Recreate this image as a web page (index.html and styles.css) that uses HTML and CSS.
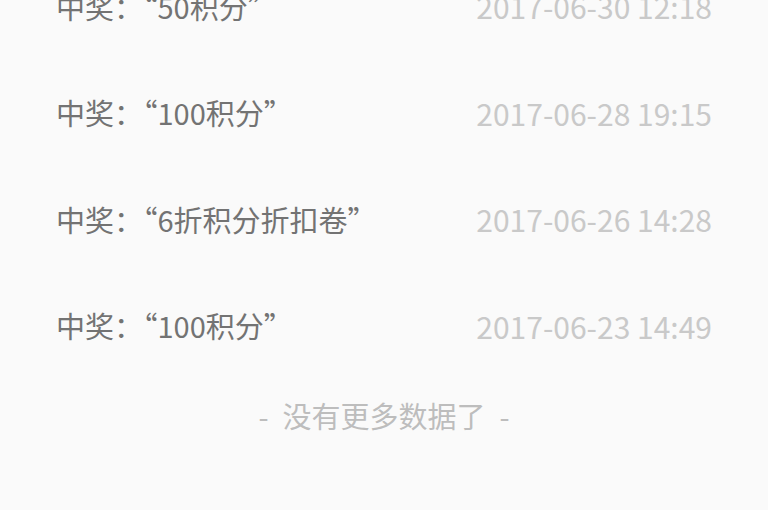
FILE: index.html
```html
<!DOCTYPE html>
<html lang="zh">
<head>
<meta charset="utf-8">
<link rel="stylesheet" href="styles.css">
</head>
<body>
<div class="page">
  <ul class="list">
    <li class="row"><span class="prize">中奖：“50积分”</span><span class="date">2017-06-30 12:18</span></li>
    <li class="row"><span class="prize">中奖：“100积分”</span><span class="date">2017-06-28 19:15</span></li>
    <li class="row"><span class="prize">中奖：“6折积分折扣卷”</span><span class="date">2017-06-26 14:28</span></li>
    <li class="row"><span class="prize">中奖：“100积分”</span><span class="date">2017-06-23 14:49</span></li>
  </ul>
  <div class="end"><span class="dash">-</span>没有更多数据了<span class="dash">-</span></div>
</div>
</body>
</html>
```
FILE: styles.css
```css
html, body {
  margin: 0;
  padding: 0;
  background: #fafafa;
}
body {
  font-family: "Noto Sans CJK SC", "Noto Sans", sans-serif;
  overflow: hidden;
  height: 510px;
}
.page {
  display: flex;
  flex-direction: column;
}
.list {
  list-style: none;
  margin: -47px 0 0;
  padding: 0;
}
.row {
  height: 106.5px;
  display: flex;
  align-items: center;
  justify-content: space-between;
  padding: 0 56px 0 56px;
}
.prize {
  font-size: 29px;
  color: #737373;
  line-height: 1;
}
.date {
  font-size: 30px;
  color: #c9c9c9;
  line-height: 1;
}
.end {
  display: flex;
  justify-content: center;
  align-items: center;
  gap: 14px;
  font-size: 29px;
  line-height: 1;
  color: #bdbdbd;
  margin-top: 22px;
}
.dash {
  display: inline-block;
}
```
